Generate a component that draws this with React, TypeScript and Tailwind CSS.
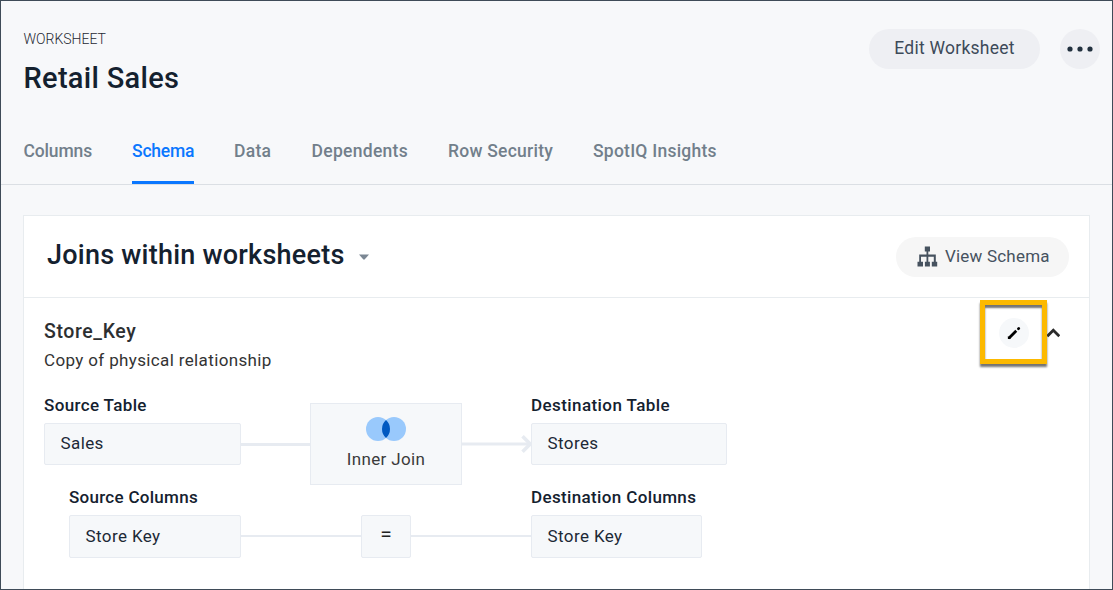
const tabs = [
  { label: "Columns", style: "w-[68.5px] tracking-[-0.15px]" },
  { label: "Schema", style: "w-[62px] tracking-[-0.2px]", active: true },
  { label: "Data", style: "w-[37.5px] tracking-[0.3px]" },
  { label: "Dependents", style: "w-[96.5px] tracking-[0.3px]" },
  { label: "Row Security", style: "w-[105px] tracking-[0.24px]" },
  { label: "SpotIQ Insights", style: "w-[124px] tracking-[0.24px]" },
];

function Header() {
  return (
    <header className="h-[184px] border-b border-[#dbdfe4] pl-[22.5px] pr-3">
      <div className="flex h-[122px] justify-between pt-7">
        <div>
          <div className="h-[19px] pt-px text-[14px] leading-[19px] font-light text-[#1f2933]">WORKSHEET</div>
          <h1 className="mt-3 text-[29px] leading-[36px] font-medium tracking-[0.3px] text-[#14212f]">Retail Sales</h1>
        </div>
        <div className="flex h-10 gap-5">
          <button className="h-10 w-[171px] rounded-full bg-[#eeeff3] pb-px text-[17.5px] tracking-[0.25px] text-[#3d4a59]">
            Edit Worksheet
          </button>
          <button className="flex size-10 items-center justify-center rounded-full bg-[#eeeff3]">
            <svg width="26" height="6" viewBox="0 0 26 6" fill="#22313f">
              <circle cx="3" cy="3" r="2.6" />
              <circle cx="13" cy="3" r="2.6" />
              <circle cx="23" cy="3" r="2.6" />
            </svg>
          </button>
        </div>
      </div>
      <nav className="flex h-[61px] gap-10">
        {tabs.map((t) => (
          <a
            key={t.label}
            className={`h-[61px] whitespace-nowrap pt-[14px] text-[17.5px] leading-[28px] font-medium ${t.style} ${
              t.active ? "border-b-[3px] border-[#0a77ff] text-[#0a77ff]" : "text-[#727f8b]"
            }`}
          >
            {t.label}
          </a>
        ))}
      </nav>
    </header>
  );
}

function SchemaIcon() {
  return (
    <svg width="21" height="21" viewBox="0 0 21 21" fill="#46525f">
      <path d="M7.8 0.5h5.2v5h-1.7v3.1h7.5v7.1h1.4v4.8h-5.4v-4.8h2v-5h-5.5v5h1.6v4.8H7.9v-4.8h1.6v-5H4v5h2v4.8H0.5v-4.8h1.7V8.6h7.3V5.5H7.8z" />
    </svg>
  );
}

function Field({ label, value, size, tracking }: { label: string; value: string; size: string; tracking: string }) {
  return (
    <div>
      <div className={`h-[31px] w-0 whitespace-nowrap text-[17px] leading-[26px] font-medium text-[#14212f] ${tracking}`}>{label}</div>
      <div className={`flex items-center rounded-[2px] border border-[#e7ebf1] bg-[#f6f8fa] pl-[15.5px] text-[17px] tracking-[0.4px] text-[#1c2936] ${size}`}>
        {value}
      </div>
    </div>
  );
}

export default function App() {
  return (
    <div className="h-[590px] w-[1113px] overflow-hidden border border-[#3f4b58] bg-[#f7f8fa] font-['Roboto',sans-serif]">
      <Header />
      <main className="mt-[30px] ml-[22px] h-[400px] w-[1067px] border border-[#e8ecef] bg-white">
        <div className="flex h-[82px] items-center justify-between border-b border-[#e8ecef] pr-5 pl-[23px]">
          <div className="flex items-center gap-[14px]">
            <h2 className="pb-[3px] text-[27px] leading-[36px] font-medium tracking-[0.24px] text-[#14212f]">Joins within worksheets</h2>
            <svg width="10" height="6" viewBox="0 0 10 6" fill="#7b8794">
              <path d="M0 0.5h10L5.8 5.3q-.8.7-1.6 0z" />
            </svg>
          </div>
          <button className="flex h-10 w-[173px] items-center rounded-full bg-[#f6f6f6] pl-[21px] text-[17px] tracking-[0.2px] text-[#46525f]">
            <SchemaIcon />
            <span className="ml-[7px]">View Schema</span>
          </button>
        </div>
        <div className="flex h-[91px] justify-between pr-[29px] pl-5">
          <div className="pt-5">
            <h3 className="h-7 text-[19.5px] leading-[28px] font-medium tracking-[0.6px] text-[#2d2f31]">Store_Key</h3>
            <p className="text-[17px] leading-[29px] tracking-[0.36px] text-[#333]">Copy of physical relationship</p>
          </div>
          <div className="flex items-start pt-[2px]">
            <div className="flex h-[64px] w-[67px] items-center justify-center border-5 border-[#fcb900] pt-[2px] shadow-[0_3px_2px_rgba(0,0,0,0.55),inset_0_3px_2px_rgba(0,0,0,0.55)]">
              <button className="flex size-[30px] items-center justify-center rounded-full bg-[#f6f8fa]">
                <svg width="14" height="14" viewBox="0 0 14 14" fill="none" stroke="#000">
                  <path d="M2.8 11.2L8.3 5.7" strokeWidth="2.8" strokeLinecap="square" />
                  <path d="M0.9 13.1v-3l3 3z" fill="#000" stroke="none" />
                  <path d="M11.4 2.8L11.8 2.4" strokeWidth="2.7" strokeLinecap="round" />
                </svg>
              </button>
            </div>
            <svg className="mt-[26px]" width="13" height="14" viewBox="0 0 13 14" fill="none" stroke="#2b2b2b" strokeWidth="2.8">
              <path d="M0.3 10.2L6.3 4.2L12.3 10.2" />
            </svg>
          </div>
        </div>
        <div className="flex h-[92px] pl-5 pt-[3px]">
          <Field label="Source Table" value="Sales" size="h-[42px] w-[197px]" tracking="tracking-[0.36px]" />
          <div className="mt-[50.5px] h-[3px] w-[69px] bg-[#e7ebf1]" />
          <div className="mt-[11px] flex h-[82px] w-[152px] flex-col items-center border border-[#e7ebf1] bg-[#f6f8fa] pt-[13px]">
            <svg width="40" height="24" viewBox="0 0 40 24">
              <circle cx="12" cy="12" r="12" fill="#99c9fc" />
              <circle cx="28" cy="12" r="12" fill="#99c9fc" />
              <path d="M20 3.06a12 12 0 0 1 0 17.88a12 12 0 0 1 0-17.88z" fill="#0059c1" />
            </svg>
            <div className="mt-[5px] text-[17px] leading-[26px] tracking-[0.35px] text-[#3b3b3b]">Inner Join</div>
          </div>
          <svg className="mt-[41px]" width="69" height="22" viewBox="0 0 69 22" fill="none" stroke="#e7ebf1" strokeWidth="3">
            <path d="M0 11H68" />
            <path d="M60.5 3.2L68.3 11L60.5 18.8" strokeWidth="3.6" />
          </svg>
          <Field label="Destination Table" value="Stores" size="h-[42px] w-[196px]" tracking="tracking-[0.42px]" />
        </div>
        <div className="flex pl-[45px] pt-[3px]">
          <Field label="Source Columns" value="Store Key" size="h-[43px] w-[172px]" tracking="tracking-[0.28px]" />
          <div className="mt-[51px] h-[2px] w-[120px] bg-[#e7ebf1]" />
          <div className="mt-[31px] flex h-[43px] w-[50px] items-center justify-center rounded-[2px] border border-[#e7ebf1] bg-[#f6f8fa] pb-[3px] text-[21px] text-[#222]">
            =
          </div>
          <div className="mt-[51px] h-[2px] w-[120px] bg-[#e7ebf1]" />
          <Field label="Destination Columns" value="Store Key" size="h-[43px] w-[171px]" tracking="tracking-[0.36px]" />
        </div>
      </main>
    </div>
  );
}
